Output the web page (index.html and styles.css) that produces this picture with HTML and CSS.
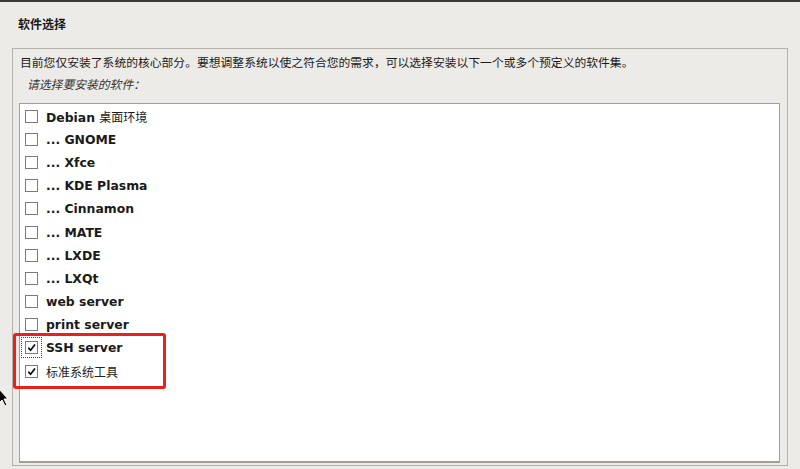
FILE: index.html
```html
<!DOCTYPE html>
<html>
<head>
  <title>软件选择</title>
  <link rel="stylesheet" href="styles.css">
</head>
<body>
  <div class="topbar"></div>
  <h1 class="title">软件选择</h1>
  <div class="frame">
    <p class="intro">目前您仅安装了系统的核心部分。要想调整系统以使之符合您的需求，可以选择安装以下一个或多个预定义的软件集。</p>
    <p class="prompt">请选择要安装的软件：</p>
    <div class="list">
      <div class="item"><span class="box"></span><span class="label">Debian <span class="cjk">桌面环境</span></span></div>
      <div class="item"><span class="box"></span><span class="label">... GNOME</span></div>
      <div class="item"><span class="box"></span><span class="label">... Xfce</span></div>
      <div class="item"><span class="box"></span><span class="label">... KDE Plasma</span></div>
      <div class="item"><span class="box"></span><span class="label">... Cinnamon</span></div>
      <div class="item"><span class="box"></span><span class="label">... MATE</span></div>
      <div class="item"><span class="box"></span><span class="label">... LXDE</span></div>
      <div class="item"><span class="box"></span><span class="label">... LXQt</span></div>
      <div class="item"><span class="box"></span><span class="label">web server</span></div>
      <div class="item"><span class="box"></span><span class="label">print server</span></div>
      <div class="highlight">
        <div class="item"><span class="box checked focus"><svg viewBox="0 0 12 12"><path d="M2.5 6.2 L5 9 L9.8 2.6" fill="none" stroke="#000" stroke-width="1.8"/></svg></span><span class="label">SSH server</span></div>
        <div class="item"><span class="box checked"><svg viewBox="0 0 12 12"><path d="M2.5 6.2 L5 9 L9.8 2.6" fill="none" stroke="#000" stroke-width="1.8"/></svg></span><span class="label cjk">标准系统工具</span></div>
      </div>
    </div>
    <svg class="cursor" viewBox="0 0 12 18" width="12" height="18">
      <path d="M0 0 L0 14 L3 11 L6 17 L8 16 L5 10 L9 10 Z" fill="#000" stroke="#fff" stroke-width="1"/>
    </svg>
  </div>
</body>
</html>
```

FILE: styles.css
```css
body {
  margin: 0;
  background-color: #edebe7;
  font-family: "DejaVu Sans", "Noto Sans CJK SC", sans-serif;
  color: #1a1a1a;
  height: 469px;
  overflow: hidden;
}

.topbar {
  height: 2px;
  background-color: #3a3a3a;
}

.title {
  font-size: 12px;
  font-weight: bold;
  margin: 0;
  padding: 13px 0 0 18px;
  height: 46px;
  box-sizing: border-box;
}

.frame {
  position: relative;
  margin: 0 12px;
  border: 1px solid #b5b2ab;
  height: 418px;
  box-sizing: border-box;
  padding: 5px 7px 0 6px;
}

.intro {
  margin: 0 0 0 1px;
  font-family: "Noto Sans CJK SC", sans-serif;
  font-size: 11.8px;
  line-height: 16px;
  white-space: nowrap;
}

.prompt {
  margin: 6px 0 0 8px;
  font-family: "Noto Sans CJK SC", sans-serif;
  font-size: 11.8px;
  font-style: italic;
  line-height: 16px;
  color: #333;
}

.list {
  margin-top: 11px;
  background-color: #fff;
  border: 1px solid #a29f99;
  border-bottom-width: 2px;
  height: 360px;
  box-sizing: border-box;
  padding: 1px 0 0 0;
}

.item {
  display: flex;
  align-items: center;
  height: 23.1px;
  padding-left: 5px;
}

.box {
  position: relative;
  width: 11px;
  height: 11px;
  border: 1px solid #7b7b7b;
  background-color: #fff;
  margin-right: 8px;
  flex: none;
}

.box svg {
  position: absolute;
  left: 0;
  top: 0;
  width: 11px;
  height: 11px;
}

.box.focus {
  outline: 1px dotted #444;
  outline-offset: 3px;
}

.label {
  font-size: 12.4px;
  font-weight: bold;
  white-space: nowrap;
}

.cjk {
  font-family: "Noto Sans CJK SC", sans-serif;
  font-weight: normal;
  font-size: 12px;
}

.label.cjk {
  color: #222;
}

.highlight {
  margin: -3px 0 0 -7px;
  width: 143px;
  padding: 0 0 3px 4px;
  border: 3px solid #e8211d;
  border-radius: 3px;
  display: flex;
  flex-direction: column;
  gap: 1px;
}

.cursor {
  position: absolute;
  left: -14px;
  top: 340px;
}
```
